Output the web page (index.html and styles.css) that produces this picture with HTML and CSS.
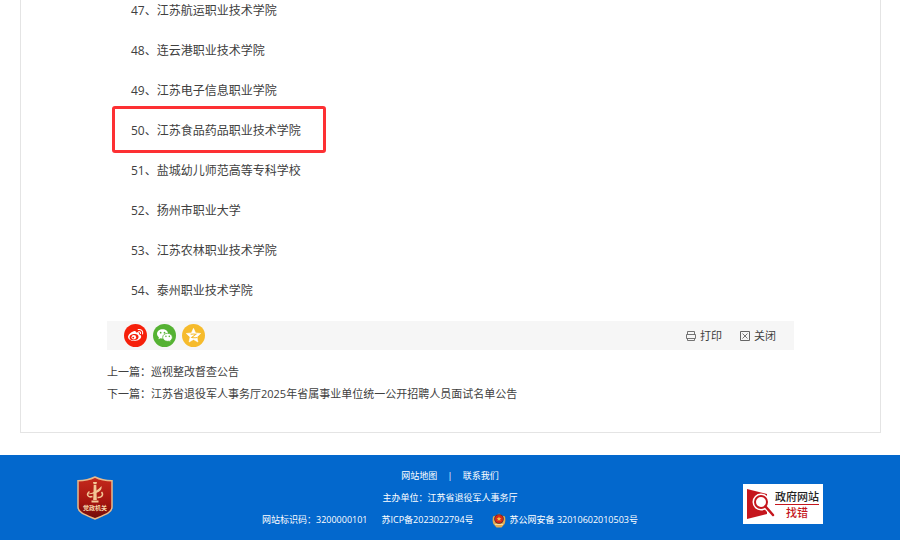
FILE: index.html
```html
<!DOCTYPE html>
<html lang="zh-CN">
<head>
  <meta charset="UTF-8">
  <meta name="viewport" content="width=device-width, initial-scale=1.0">
  <title>江苏省退役军人事务厅</title>
  <link rel="stylesheet" href="styles.css">
</head>
<body>
  <main class="article">
    <ol class="school-list">
      <li>47、江苏航运职业技术学院</li>
      <li>48、连云港职业技术学院</li>
      <li>49、江苏电子信息职业学院</li>
      <li><span class="marked">50、江苏食品药品职业技术学院</span></li>
      <li>51、盐城幼儿师范高等专科学校</li>
      <li>52、扬州市职业大学</li>
      <li>53、江苏农林职业技术学院</li>
      <li>54、泰州职业技术学院</li>
    </ol>

    <div class="toolbar">
      <div class="share">
        <a href="#" aria-label="微博">
          <svg viewBox="0 0 24 24">
            <circle cx="12" cy="12" r="12" fill="#f6200b"/>
            <path d="M10 7.500c1.600-.8 3 0 2.500 1.600 2-.8 3.800-.3 3.200 1.500 1.500.5 2.200 1.300 2.200 2.400 0 2.500-3.200 4.600-7 4.600S4.200 15.900 4.200 13.500c0-2 2.800-4.900 5.800-6z" fill="#fff"/>
            <ellipse cx="10.500" cy="13.600" rx="4.700" ry="3.200" fill="#f6200b" transform="rotate(-8 10.500 13.600)"/>
            <circle cx="10.200" cy="13.800" r="2.400" fill="#fff"/>
            <circle cx="9.600" cy="14.200" r="1" fill="#f6200b"/>
            <path d="M14.800 5.800c3-.6 5.300 1.600 4.600 4.600M15.200 8c1.500-.2 2.300.7 2 2" fill="none" stroke="#fff" stroke-width="1.100" stroke-linecap="round"/>
          </svg>
        </a>
        <a href="#" aria-label="微信">
          <svg viewBox="0 0 24 24">
            <circle cx="12" cy="12" r="12" fill="#55b233"/>
            <path d="M10 5.500c-3.300 0-5.800 2.100-5.800 4.800 0 1.500.8 2.800 2 3.700l-.5 1.900 2.200-1.100c.7.200 1.400.3 2.100.3 3.300 0 5.800-2.100 5.800-4.800S13.300 5.500 10 5.500z" fill="#fff"/>
            <path d="M15.200 9.700c-2.900 0-5.100 1.900-5.100 4.200s2.200 4.200 5.100 4.200c.6 0 1.200-.1 1.700-.2l1.900 1-.5-1.700c1.200-.8 1.900-2 1.900-3.300 0-2.300-2.200-4.200-5-4.200z" fill="#fff" stroke="#55b233" stroke-width=".8"/>
            <g fill="#55b233">
              <circle cx="8" cy="9" r=".9"/><circle cx="12" cy="9" r=".9"/>
              <circle cx="13.500" cy="12.900" r=".8"/><circle cx="17" cy="12.900" r=".8"/>
            </g>
          </svg>
        </a>
        <a href="#" aria-label="QQ空间">
          <svg viewBox="0 0 24 24">
            <circle cx="12" cy="12" r="12" fill="#f6bb2c"/>
            <path d="M12 4.500l2.200 4.800 5.300.6-3.900 3.600 1 5.300-4.600-2.600-4.600 2.600 1-5.300-3.900-3.600 5.300-.6z" fill="#fff" stroke="#fff" stroke-width=".6" stroke-linejoin="round"/>
            <path d="M9 10.700c2-.4 3.800-.4 5.600-.1L10.200 14c1.800.4 3.600.4 5.400.1" fill="none" stroke="#f6bb2c" stroke-width="1.100"/>
          </svg>
        </a>
      </div>
      <div class="actions">
        <button type="button">
          <svg viewBox="0 0 10 10" fill="none" stroke="#666">
            <path d="M1.500 3.500v-3h7v3M.5 7.500v-4h9v4zM1.500 7.500v2h7v-2" stroke-width=".9"/>
          </svg>
          打印
        </button>
        <button type="button">
          <svg viewBox="0 0 10 10" fill="none" stroke="#666">
            <path d="M.5.5h9v9h-9z"/>
            <path d="M2.500 2.500l5 5M7.500 2.500l-5 5" stroke-width=".9"/>
          </svg>
          关闭
        </button>
      </div>
    </div>

    <div class="siblings">
      <p>上一篇：<a href="#">巡视整改督查公告</a></p>
      <p>下一篇：<a href="#">江苏省退役军人事务厅2025年省属事业单位统一公开招聘人员面试名单公告</a></p>
    </div>
  </main>

  <footer class="footer">
    <a class="party-badge" href="#" aria-label="党政机关">
      <svg viewBox="0 0 36 44">
        <defs>
          <linearGradient id="shield" x1="0" y1="0" x2="0" y2="1">
            <stop offset="0" stop-color="#c52a1c"/>
            <stop offset=".6" stop-color="#a51510"/>
            <stop offset="1" stop-color="#6d0c0a"/>
          </linearGradient>
        </defs>
        <path d="M18 1c5 2.500 11 3.700 17 3.800V31c0 5.500-6 7.500-17 12C7 38.500 1 36.500 1 31V4.800C7 4.700 13 3.500 18 1z" fill="url(#shield)" stroke="#e9b98b" stroke-width="1.500"/>
        <g fill="#f3c796">
          <path d="M16 6h4l-.6 2.200h-2.800zM16.700 9h2.600l.5 15h-3.600zM14.500 24.500h7v2h-7z"/>
          <path d="M10 17.500c4 .5 10-2.500 14.500-7.500.8 3.500-2 6-5.500 7-3.500 1-7 1.800-9 .5z"/>
        </g>
        <path d="M12.500 15.500c-3.500 2.500-2 6.500 3 5M20.500 21.500c4 .5 6.500-2.500 4-5.500" fill="none" stroke="#f3c796" stroke-width="1.500"/>
        <text x="18" y="34" class="badge-text">党政机关</text>
      </svg>
    </a>

    <div class="footer-info">
      <p class="footer-nav">
        <a href="#">网站地图</a>
        <span>|</span>
        <a href="#">联系我们</a>
      </p>
      <p>主办单位：江苏省退役军人事务厅</p>
      <p class="records">
        <span>网站标识码：3200000101</span>
        <a href="#">苏ICP备2023022794号</a>
        <a class="police" href="#">
          <svg viewBox="0 0 14 15">
            <path d="M1 3.500C3 3 5 2 7 .5 9 2 11 3 13 3.500c.5 3 .5 5-.4 7.500L9.500 14.500h-5L1.400 11C.5 8.500.5 6.500 1 3.500z" fill="#e5aa50"/>
            <circle cx="7" cy="6" r="4.800" fill="#4a2b35"/>
            <circle cx="7" cy="6" r="4" fill="#d92718"/>
            <path d="M7 3.500l.7 1.600 1.700.1-1.300 1.100.4 1.700L7 7.100 5.500 8l.4-1.700-1.300-1.100 1.700-.1z" fill="#f6c146"/>
            <path d="M3 11.500h8" stroke="#f8dfa5"/>
          </svg>
          苏公网安备 32010602010503号
        </a>
      </p>
    </div>

    <a class="find-error" href="#">
      <svg viewBox="0 0 28 32">
        <path d="M0 1l20 5v20L0 31z" fill="#c5161d"/>
        <path d="M19 19l8 9" stroke="#fff" stroke-width="5"/>
        <circle cx="14" cy="14" r="8.500" fill="#fff"/>
        <circle cx="14" cy="14" r="6" fill="#fff" stroke="#c5161d" stroke-width="2"/>
        <path d="M18.500 18.500l7.500 8.500" stroke="#c5161d" stroke-width="2.500" stroke-linecap="round"/>
      </svg>
      <span class="find-error-text">
        <span>政府网站</span>
        <strong>找错</strong>
      </span>
    </a>
  </footer>
</body>
</html>
```
FILE: styles.css
```css
body, p, ol {
  margin: 0;
  padding: 0;
}

body {
  font-family: "Open Sans", "Noto Sans CJK SC", sans-serif;
  color: #404040;
  background-color: #fff;
}

a {
  color: inherit;
  text-decoration: none;
}

svg {
  display: block;
}

.article {
  margin: 0 19px 22px 20px;
  padding: 0 86px 27px;
  border: 1px solid #e4e4e4;
  border-top: none;
}

.school-list {
  list-style: none;
  padding: 0 24px 10px;
  margin-top: -9px;
  font-size: 12px;
  line-height: 40px;
}

.marked {
  position: relative;
}

/* red frame drawn round the highlighted school */
.marked::after {
  content: "";
  position: absolute;
  top: -16px;
  right: -25px;
  bottom: -14px;
  left: -19px;
  border: 3px solid #fd3033;
  border-radius: 3px;
}

.toolbar {
  display: flex;
  justify-content: space-between;
  align-items: center;
  height: 29px;
  padding: 0 18px 0 17px;
  background-color: #f6f6f6;
}

.share {
  display: flex;
  gap: 6px;
}

.share svg {
  width: 23px;
  height: 23px;
}

.actions {
  display: flex;
  gap: 18px;
}

.actions button {
  display: flex;
  align-items: center;
  gap: 4px;
  padding: 0;
  border: none;
  background: none;
  font-family: inherit;
  font-size: 11px;
  line-height: 14px;
  color: #404040;
  cursor: pointer;
}

.actions svg {
  width: 10px;
  height: 10px;
}

.siblings {
  padding-top: 11px;
  font-size: 11px;
  line-height: 22px;
}

.footer {
  display: grid;
  grid-template-columns: 1fr auto 1fr;
  align-items: center;
  padding: 10px 77px 9px;
  background-color: #0368cd;
  color: #fff;
  font-size: 9px;
  line-height: 22px;
}

.party-badge svg {
  width: 36px;
  height: 44px;
}

.badge-text {
  fill: #f9d7ab;
  font-size: 6px;
  font-weight: bold;
  text-anchor: middle;
}

.footer-info {
  text-align: center;
}

.footer-nav span {
  padding: 0 8px;
}

.records {
  display: flex;
  gap: 14px;
}

.police {
  display: flex;
  align-items: center;
  gap: 4px;
  padding-left: 4px;
}

.police svg {
  width: 14px;
  height: 15px;
}

.find-error {
  display: flex;
  align-items: center;
  justify-self: end;
  margin-top: 12px;
  padding: 4px;
  background-color: #fff;
  color: #222;
}

.find-error > svg {
  width: 28px;
  height: 32px;
}

.find-error-text {
  display: flex;
  flex-direction: column;
  align-items: center;
  font-size: 11px;
  font-weight: 500;
  line-height: 15px;
}

.find-error-text strong {
  width: 100%;
  border-top: 1px solid #c5161d;
  color: #c5161d;
  font-weight: 500;
  text-align: center;
}
```
